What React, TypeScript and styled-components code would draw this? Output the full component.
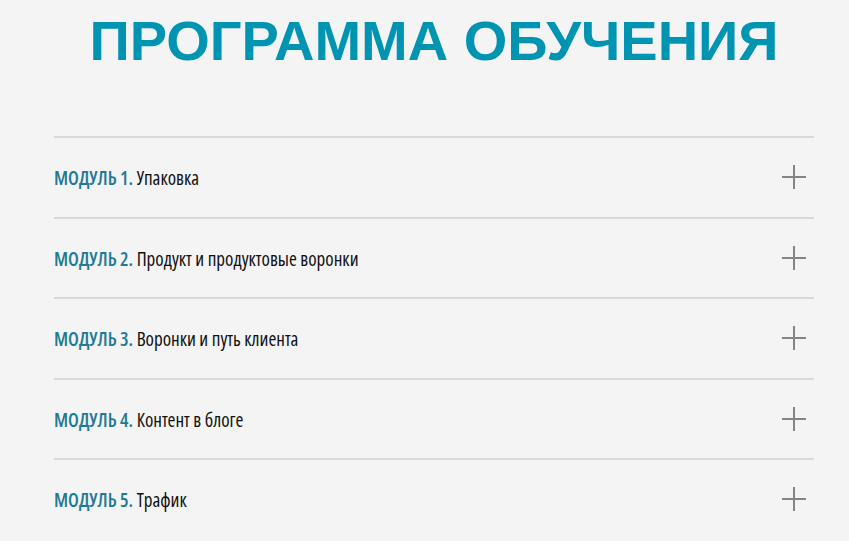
import React from "react";
import styled, { createGlobalStyle } from "styled-components";

const Global = createGlobalStyle`
  html, body {
    margin: 0;
    padding: 0;
    background: #f4f4f4;
  }
  * { box-sizing: border-box; }
`;

const Page = styled.div`
  min-height: 541px;
  background: #f4f4f4;
  padding: 0 35px 0 54px;
`;

const Title = styled.h1`
  margin: 0;
  padding-top: 9px;
  height: 136px;
  font-family: "Liberation Sans", Arial, sans-serif;
  font-weight: 700;
  font-size: 56px;
  line-height: 64px;
  color: #0094b3;
  text-align: center;
`;

const List = styled.div`
  display: flex;
  flex-direction: column;
`;

const Row = styled.div`
  display: flex;
  align-items: center;
  justify-content: space-between;
  height: 80.5px;
  border-top: 2px solid #d9d9d9;
  padding-right: 8px;
`;

const Label = styled.div`
  font-family: "Open Sans", "Noto Sans", sans-serif;
  font-stretch: 75%;
  font-size: 19px;
  font-weight: 400;
  color: #111;
  padding-top: 2px;
`;

const Prefix = styled.span`
  color: #1f7b93;
  font-weight: 600;
`;

const PlusIcon = () => (
  <svg width="24" height="24" viewBox="0 0 24 24">
    <path d="M12 0V24M0 12H24" stroke="#858585" strokeWidth="2" fill="none" />
  </svg>
);

const modules = [
  "Упаковка",
  "Продукт и продуктовые воронки",
  "Воронки и путь клиента",
  "Контент в блоге",
  "Трафик",
];

export default function App() {
  return (
    <Page>
      <Global />
      <Title>ПРОГРАММА ОБУЧЕНИЯ</Title>
      <List>
        {modules.map((m, i) => (
          <Row key={i}>
            <Label>
              <Prefix>МОДУЛЬ {i + 1}.</Prefix> {m}
            </Label>
            <PlusIcon />
          </Row>
        ))}
      </List>
    </Page>
  );
}
